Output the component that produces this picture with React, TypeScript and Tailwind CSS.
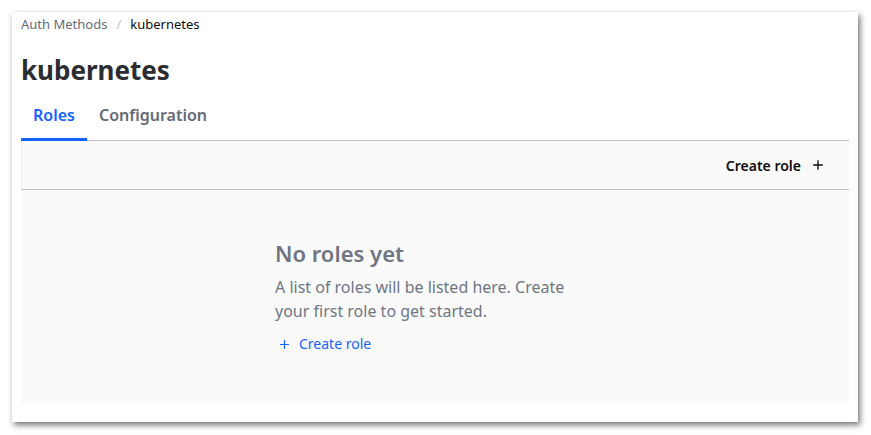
import React from "react";

const font = { fontFamily: '"Noto Sans", "Liberation Sans", sans-serif' };

const Plus = ({ className }: { className?: string }) => (
  <svg viewBox="0 0 16 16" className={className} fill="none" stroke="currentColor" strokeWidth={1.5}>
    <path d="M8 2.5v11M2.5 8h11" />
  </svg>
);

export default function App() {
  return (
    <div className="w-[871px] h-[435px] bg-white pt-3 pl-3" style={font}>
      <div className="w-[846px] h-[410px] bg-white shadow-[2px_3px_6px_rgba(0,0,0,0.55)] px-[9px] pt-[3px] flex flex-col">
        {/* breadcrumb */}
        <nav className="flex items-center text-[13px] h-[18px] leading-[18px]">
          <span className="text-[#656a76]">Auth Methods</span>
          <span className="text-[#c2c5cb] mx-[9px]">/</span>
          <span className="text-[#0c0c0e]">kubernetes</span>
        </nav>

        <h1 className="text-[26px] font-bold text-[#2b2d33] leading-[32px] mt-[21px]">kubernetes</h1>

        {/* tabs */}
        <div className="flex mt-[11px] border-b border-[#bac1cc]">
          <div className="px-3 pt-[8px] pb-[13px] text-[16px] font-semibold leading-[20px] text-[#1563ff] border-b-[3px] border-[#1563ff] -mb-px">
            Roles
          </div>
          <div className="px-3 pt-[8px] pb-[13px] text-[16px] font-semibold leading-[20px] text-[#656a76]">
            Configuration
          </div>
        </div>

        {/* toolbar */}
        <div className="h-[49px] bg-[#fafafa] border-l border-[#ebeef2] border-b border-b-[#bac1cc] flex items-center justify-end pr-[24px]">
          <button className="flex items-center gap-[10px] text-[14px] font-semibold text-[#0c0c0e]">
            Create role
            <Plus className="w-[14px] h-[14px]" />
          </button>
        </div>

        {/* empty state */}
        <div className="h-[214px] bg-[#fafafa] flex justify-center pt-[49px]">
          <div className="w-[320px]">
            <h2 className="text-[22px] font-semibold text-[#6f7682] leading-[28px]">No roles yet</h2>
            <p className="text-[16px] text-[#6f7682] leading-[24px] mt-[8px]">
              A list of roles will be listed here. Create your first role to get started.
            </p>
            <a className="mt-[11px] flex items-center gap-[8px] text-[14px] text-[#1563ff] leading-[20px]">
              <Plus className="w-[13px] h-[13px] ml-[3px]" />
              Create role
            </a>
          </div>
        </div>
      </div>
    </div>
  );
}
